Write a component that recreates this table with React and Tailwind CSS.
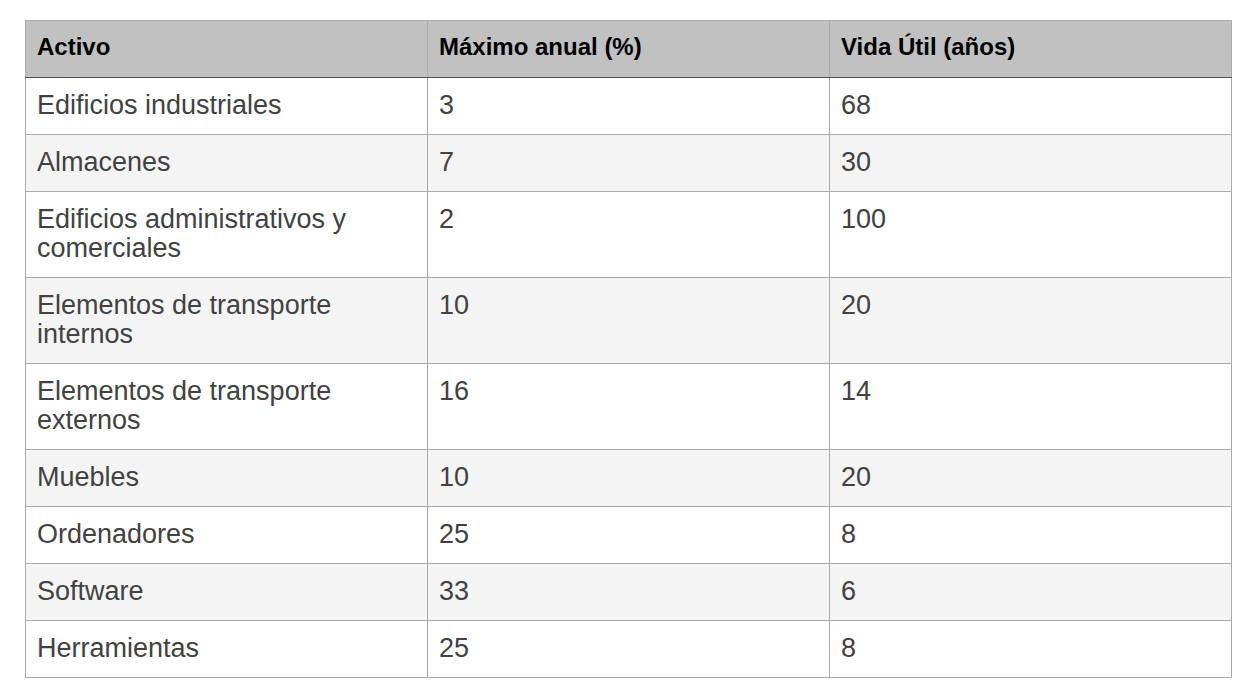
import React from "react";

const rows = [
  ["Edificios industriales", "3", "68"],
  ["Almacenes", "7", "30"],
  ["Edificios administrativos y comerciales", "2", "100"],
  ["Elementos de transporte internos", "10", "20"],
  ["Elementos de transporte externos", "16", "14"],
  ["Muebles", "10", "20"],
  ["Ordenadores", "25", "8"],
  ["Software", "33", "6"],
  ["Herramientas", "25", "8"],
];

export default function App() {
  return (
    <div className="w-[1257px] h-[698px] bg-white pt-[20px] pl-[25px] font-['Liberation_Sans',Arial,sans-serif]">
      <table className="w-[1206px] table-fixed border-collapse border border-[#aaaaaa]">
        <colgroup>
          <col className="w-[402px]" />
          <col className="w-[402px]" />
          <col className="w-[402px]" />
        </colgroup>
        <thead>
          <tr className="bg-[#c0c1c0]">
            {["Activo", "Máximo anual (%)", "Vida Útil (años)"].map((h) => (
              <th
                key={h}
                className="border border-[#aaaaaa] border-b-[#555555] pl-[11px] pr-[11px] pt-[10px] pb-[14px] text-left align-top text-[24px] leading-[32px] font-bold text-black"
              >
                {h}
              </th>
            ))}
          </tr>
        </thead>
        <tbody>
          {rows.map((r, i) => (
            <tr key={i} className={i % 2 === 1 ? "bg-[#f4f4f4]" : "bg-white"}>
              {r.map((c, j) => (
                <td
                  key={j}
                  className="border border-[#aaaaaa] pl-[11px] pr-[11px] pt-[13px] pb-[14px] align-top text-[27px] leading-[29px] text-[#424242]"
                >
                  {c}
                </td>
              ))}
            </tr>
          ))}
        </tbody>
      </table>
    </div>
  );
}
